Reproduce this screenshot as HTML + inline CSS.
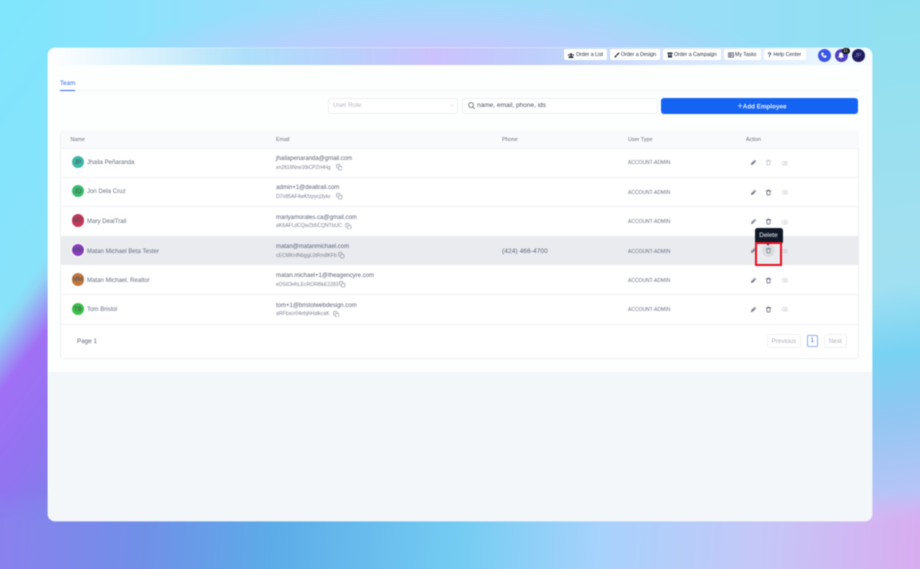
<!DOCTYPE html>
<html><head><meta charset="utf-8"><style>
html,body{margin:0;padding:0}
body{width:920px;height:569px;position:relative;overflow:hidden;background:#9fdcf9;font-family:"Liberation Sans",sans-serif}
div,span.a,svg.a{position:absolute}
.t{position:absolute;white-space:nowrap;line-height:10px;height:10px;margin-top:1px}
.n{font-size:6.1px;color:#667080;left:87px}
.e{font-size:6px;color:#5c6575;left:276px}
.s{font-size:5.1px;color:#7a8290;left:276px;margin-top:.5px}
.u{font-size:5px;color:#6b7382;left:628px}
.h{font-size:5.4px;color:#687080;top:134px}
.av{width:12.5px;height:12.5px;border-radius:50%;left:70.5px;border:.5px solid #fff;font-size:6px;line-height:14px;text-align:center;color:#44505c}
.b{top:49px;height:11px;background:#fff;border-radius:2px;font-size:5.2px;line-height:13px;color:#1f2937;white-space:nowrap;box-sizing:border-box}
.r{left:60.5px;width:798px;height:.7px;background:#f1f2f5}
svg.i{position:absolute;fill:none;stroke-linecap:round;stroke-linejoin:round}
</style></head><body>
<svg width="0" height="0" style="position:absolute"><defs>
<symbol id="pen" viewBox="0 0 24 24"><path d="M4 20l1.500-5.500L16 4l4 4L9.500 18.500z" fill="currentColor" stroke="currentColor" stroke-width="2"/><path d="M13.500 6.500l4 4" stroke="#fff" stroke-width="1.500"/></symbol>
<symbol id="tr" viewBox="0 0 24 24"><path d="M4 6.500h16M9 6.500V4h6v2.500M6 6.500l1.500 14h9L18 6.500" fill="none" stroke="currentColor" stroke-width="2.600"/></symbol>
<symbol id="x" viewBox="0 0 24 24"><path d="M8 5h11a3 3 0 013 3v8a3 3 0 01-3 3H8l-6-7zM11 9l6 6M17 9l-6 6" fill="none" stroke="currentColor" stroke-width="2"/></symbol>
<symbol id="cp" viewBox="0 0 24 24"><rect x="9" y="9" width="13" height="13" rx="2.500" fill="none" stroke="currentColor" stroke-width="2"/><path d="M5 15H4a2 2 0 01-2-2V4a2 2 0 012-2h9a2 2 0 012 2v1" fill="none" stroke="currentColor" stroke-width="2"/></symbol>
</defs></svg>

<!-- background strips -->
<div style="left:0;top:0;width:920px;height:70px;background:radial-gradient(ellipse 330px 62px at 440px 62px,#cfc2fd 0,rgba(190,205,253,.85) 45%,rgba(170,215,252,0) 100%),linear-gradient(90deg,#7fe6fd 0,#9fdcfb 35%,#9fdcfa 60%,#8ee0f2 100%)"></div>
<div style="left:0;top:0;width:48px;height:569px;background:linear-gradient(127deg,#7fe6fd 0,#88e2fa 50%,#90d4f5 53%,#a070f5 62%,#9074f0 78%,#8080ea 92%)"></div>
<div style="left:872px;top:0;width:48px;height:569px;background:linear-gradient(172deg,#8ee0f0 0,#a2e0f0 42%,#a0e0f2 50%,#78d2f2 62%,#92c6f2 73%,#c0c4f8 90%,#d4b0f0 100%)"></div>
<div style="left:0;top:490px;width:920px;height:79px;background:linear-gradient(94deg,#8a80ee 0,#7090e8 16%,#5cace8 30%,#74ccf2 50%,#a6d2fc 65%,#c4c8f8 82%,#d8acf0 100%);-webkit-mask-image:linear-gradient(180deg,transparent 0,#000 31px);mask-image:linear-gradient(180deg,transparent 0,#000 31px)"></div>

<div style="left:0;top:0;width:920px;height:569px;filter:blur(.4px)">
<!-- card -->
<div style="left:47.500px;top:48px;width:824.500px;height:473px;border-radius:7px;overflow:hidden;background:#f3f7fa;box-shadow:0 0 0 .5px rgba(255,255,255,.7)">
<div style="left:0;top:0;width:100%;height:16.500px;background:linear-gradient(90deg,#fff 0,#d3effc 14%,#aee0fa 24%,#bbcffc 37%,#cbc2fc 47%,#bed0fc 60%,#d6e4fd 75%,#e6f3fe 92%,#f8fcff 100%);border-bottom:.8px solid #dcdfe2"></div>
<div style="left:0;top:17.300px;width:100%;height:307px;background:#fdfefe"></div>
</div>

<!-- top bar -->
<div class="b" style="left:564px;width:43px;padding-left:12px">Order a List</div>
<div class="b" style="left:610px;width:50px;padding-left:11px">Order a Design</div>
<div class="b" style="left:663px;width:58px;padding-left:11px">Order a Campaign</div>
<div class="b" style="left:724px;width:37px;padding-left:11px">My Tasks</div>
<div class="b" style="left:764px;width:42px;padding-left:9.500px">Help Center</div>
<svg class="a" style="left:568px;top:52.500px" width="6" height="5" viewBox="0 0 12 10"><circle cx="6" cy="3" r="2.500" fill="#1f2937"/><path d="M1 10c0-3 2-4 5-4s5 1 5 4z" fill="#1f2937"/><circle cx="1.500" cy="4" r="1.500" fill="#1f2937"/><circle cx="10.500" cy="4" r="1.500" fill="#1f2937"/></svg>
<svg class="a" style="left:614px;top:52px" width="6" height="6" viewBox="0 0 12 12"><path d="M1 11c0-3 1-4 3-4l1 1c0 2-1 3-4 3zM4 6l5-5 2 1-1 2-5 4z" fill="#1f2937"/></svg>
<svg class="a" style="left:667px;top:52px" width="6" height="6" viewBox="0 0 12 12"><path d="M1 1h10v3H1zM2 5h8v6H2z" fill="#1f2937"/><path d="M3.500 7h5" stroke="#fff"/></svg>
<svg class="a" style="left:728px;top:52px" width="6" height="6" viewBox="0 0 12 12" fill="none" stroke="#374151" stroke-width="1.200"><rect x="1" y="1.500" width="10" height="9"/><path d="M5 1.500v9M1 4.500h10M1 7.500h10"/></svg>
<div class="t" style="left:767.500px;top:50px;font-size:6.500px;font-weight:bold;color:#1f2937">?</div>

<div style="left:817.500px;top:48.500px;width:13px;height:13px;border-radius:50%;background:#3a56e8"></div>
<svg class="a" style="left:821px;top:52px" width="6" height="6" viewBox="0 0 24 24"><path d="M6 2l4 1 1 6-3 2c1 3 3 5 5 5l2-3 6 1 1 4c0 3-2 5-5 5C9 23 1 14 1 7c0-3 2-5 5-5z" fill="#fff"/></svg>
<div style="left:834.500px;top:48.500px;width:13px;height:13px;border-radius:50%;background:#4f3fc0"></div>
<svg class="a" style="left:838px;top:52px" width="6" height="7" viewBox="0 0 12 14"><path d="M6 1a4 4 0 014 4v3l2 3H0l2-3V5a4 4 0 014-4zM4.500 12h3a1.500 1.500 0 01-3 0z" fill="#fff"/></svg>
<div style="left:841.500px;top:47.800px;width:8px;height:6px;border-radius:3px;background:#111;color:#fff;font-size:4.400px;line-height:6px;text-align:center">11</div>
<div style="left:851.500px;top:48.500px;width:13px;height:13px;border-radius:50%;background:#1e1b5e;color:#9a9ac8;font-size:5.600px;line-height:14px;text-align:center">JP</div>

<!-- tabs -->
<div class="t" style="left:60px;top:78px;font-size:6.300px;color:#3b6fe8">Team</div>
<div style="left:60px;top:90.400px;width:799px;height:.6px;background:#f1f3f7"></div>
<div style="left:60px;top:89.800px;width:14.500px;height:1.200px;background:#2f6bea"></div>

<!-- filters -->
<div style="left:328px;top:97.500px;width:129.500px;height:16px;box-sizing:border-box;background:#fff;border:.7px solid #eceef1;border-radius:3px"></div>
<div class="t" style="left:333px;top:100px;font-size:6.400px;color:#b4b9c2">User Role</div>
<svg class="a" style="left:449.500px;top:104px" width="4" height="3" viewBox="0 0 8 6" fill="none" stroke="#c4c8ce"><path d="M1 1l3 3 3-3"/></svg>
<div style="left:461.500px;top:97.500px;width:196.500px;height:16px;box-sizing:border-box;background:#fff;border:.7px solid #eceef1;border-radius:3px"></div>
<svg class="a" style="left:467.500px;top:101.500px" width="7" height="7.500" viewBox="0 0 14 15" fill="none" stroke="#4b5563" stroke-width="1.400"><circle cx="6" cy="6" r="4.800"/><path d="M9.500 10l4 4"/></svg>
<div class="t" style="left:477px;top:100px;font-size:6.500px;color:#4b5563">name, email, phone, ids</div>
<div style="left:661px;top:97.500px;width:196.500px;height:16px;background:#1463f3;border-radius:3px;color:#e9f0ff;font-size:6.300px;font-weight:bold;line-height:16px;padding-left:76.500px;box-sizing:border-box"><span style="font-size:9px;font-weight:normal;vertical-align:-.5px">+</span>Add Employee</div>

<!-- table -->
<div style="left:60px;top:130.500px;width:799px;height:228.500px;box-sizing:border-box;background:#fff;border:.7px solid #eef0f3;border-radius:3px"></div>
<div style="left:60.500px;top:131px;width:798px;height:17px;background:#f9fafb;border-radius:3px 3px 0 0"></div>
<div class="r" style="top:147.500px"></div>
<div class="r" style="top:177px"></div>
<div class="r" style="top:206px"></div>
<div class="r" style="top:294px"></div>
<div class="r" style="top:323.700px"></div>
<div style="left:60.500px;top:236px;width:798px;height:29px;background:#e9ebef"></div>

<div class="t h" style="left:70.500px">Name</div>
<div class="t h" style="left:276px">Email</div>
<div class="t h" style="left:502px">Phone</div>
<div class="t h" style="left:628px">User Type</div>
<div class="t h" style="left:746px">Action</div>

<!-- row 1 -->
<div class="av" style="top:154.500px;background:#3fb8a6">JP</div>
<div class="t n" style="top:157px">Jhaila Peñaranda</div>
<div class="t e" style="top:153px">jhailapenaranda@gmail.com</div>
<div class="t s" style="top:162px">xn2lt16Nne39iCPZrHHg</div>
<svg class="i" style="left:335.500px;top:164px;color:#7a8290" width="6.500" height="6.500"><use href="#cp"/></svg>
<div class="t u" style="top:157px">ACCOUNT-ADMIN</div>
<!-- row 2 -->
<div class="av" style="top:183.500px;background:#3bba6a">JD</div>
<div class="t n" style="top:186px">Jon Dela Cruz</div>
<div class="t e" style="top:182px">admin+1@dealtrail.com</div>
<div class="t s" style="top:191px">D7n85AF4wKfzpycj3ykc</div>
<svg class="i" style="left:336px;top:193px;color:#7a8290" width="6.500" height="6.500"><use href="#cp"/></svg>
<div class="t u" style="top:186.500px">ACCOUNT-ADMIN</div>
<!-- row 3 -->
<div class="av" style="top:213px;background:#c4385a">MD</div>
<div class="t n" style="top:216px">Mary DealTrail</div>
<div class="t e" style="top:211.500px">mariyamorales.ca@gmail.com</div>
<div class="t s" style="top:220.500px">aK6AFLdCQwZb5CQNTbUC</div>
<svg class="i" style="left:345px;top:222.500px;color:#7a8290" width="6.500" height="6.500"><use href="#cp"/></svg>
<div class="t u" style="top:216px">ACCOUNT-ADMIN</div>
<!-- row 4 -->
<div class="av" style="top:242.500px;background:#8a3cc0">MM</div>
<div class="t n" style="top:245.500px">Matan Michael Beta Tester</div>
<div class="t e" style="top:241px">matan@matanmichael.com</div>
<div class="t s" style="top:250px">cECMKnfNbggL0tRm8KFb</div>
<svg class="i" style="left:338px;top:252px;color:#7a8290" width="6.500" height="6.500"><use href="#cp"/></svg>
<div class="t" style="left:502px;top:245.500px;font-size:6.500px;color:#5c6575;letter-spacing:.1px">(424) 466-4700</div>
<div class="t u" style="top:245.500px">ACCOUNT-ADMIN</div>
<!-- row 5 -->
<div class="av" style="top:272px;background:#c0773e">MM</div>
<div class="t n" style="top:274.500px">Matan Michael, Realtor</div>
<div class="t e" style="top:270px">matan.michael+1@theagencyre.com</div>
<div class="t s" style="top:279px">eDSIOHhLEcRORBkE2283</div>
<svg class="i" style="left:339px;top:281px;color:#7a8290" width="6.500" height="6.500"><use href="#cp"/></svg>
<div class="t u" style="top:275px">ACCOUNT-ADMIN</div>
<!-- row 6 -->
<div class="av" style="top:301.500px;background:#3cc048">TB</div>
<div class="t n" style="top:304px">Tom Bristol</div>
<div class="t e" style="top:300px">tom+1@bristolwebdesign.com</div>
<div class="t s" style="top:308.500px">aRFbxcr04ebjhHalkcaK</div>
<svg class="i" style="left:332.500px;top:310.500px;color:#7a8290" width="6.500" height="6.500"><use href="#cp"/></svg>
<div class="t u" style="top:304px">ACCOUNT-ADMIN</div>

<!-- action icons -->
<svg class="i" style="left:749.500px;top:159px;color:#7b828e" width="7" height="7"><use href="#pen"/></svg>
<svg class="i" style="left:765px;top:159px;color:#c2c5ca" width="7" height="7"><use href="#tr"/></svg>
<svg class="i" style="left:780.500px;top:159.500px;color:#c2c5ca" width="7" height="6.500"><use href="#x"/></svg>

<svg class="i" style="left:749.500px;top:188.500px;color:#7b828e" width="7" height="7"><use href="#pen"/></svg>
<svg class="i" style="left:765px;top:188.500px;color:#5f6775" width="7" height="7"><use href="#tr"/></svg>
<svg class="i" style="left:780.500px;top:189px;color:#c2c5ca" width="7" height="6.500"><use href="#x"/></svg>

<svg class="i" style="left:749.500px;top:218px;color:#8a909b" width="7" height="7"><use href="#pen"/></svg>
<svg class="i" style="left:765px;top:218px;color:#5f6775" width="7" height="7"><use href="#tr"/></svg>
<svg class="i" style="left:780.500px;top:218.500px;color:#c2c5ca" width="7" height="6.500"><use href="#x"/></svg>

<svg class="i" style="left:749.500px;top:247px;color:#7b828e" width="7" height="7"><use href="#pen"/></svg>
<svg class="i" style="left:780.500px;top:247.500px;color:#c2c5ca" width="7" height="6.500"><use href="#x"/></svg>
<div style="left:761.500px;top:243.500px;width:13.500px;height:13.500px;border-radius:50%;background:#dcdde1"></div>
<svg class="i" style="left:765px;top:247px;color:#7b828e" width="7" height="7"><use href="#tr"/></svg>

<svg class="i" style="left:749.500px;top:276.500px;color:#7b828e" width="7" height="7"><use href="#pen"/></svg>
<svg class="i" style="left:765px;top:276.500px;color:#5f6775" width="7" height="7"><use href="#tr"/></svg>
<svg class="i" style="left:780.500px;top:277px;color:#c2c5ca" width="7" height="6.500"><use href="#x"/></svg>

<svg class="i" style="left:749.500px;top:305.500px;color:#7b828e" width="7" height="7"><use href="#pen"/></svg>
<svg class="i" style="left:765px;top:305.500px;color:#5f6775" width="7" height="7"><use href="#tr"/></svg>
<svg class="i" style="left:780.500px;top:306px;color:#c2c5ca" width="7" height="6.500"><use href="#x"/></svg>

<!-- tooltip and highlight -->
<div style="left:754.500px;top:228px;width:28px;height:16px;background:#111827;border-radius:2.500px;color:#f3f4f6;font-size:6.400px;line-height:16px;text-align:center">Delete</div>
<div style="left:767px;top:243px;width:2px;height:2px;background:#111827;transform:rotate(45deg)"></div>
<div style="left:755px;top:241.500px;width:27px;height:24px;box-sizing:border-box;border:2px solid #e5101f"></div>

<!-- pagination -->
<div class="t" style="left:77px;top:335.500px;font-size:6.300px;color:#5c6575">Page 1</div>
<div style="left:766.500px;top:333.500px;width:34.500px;height:14.500px;box-sizing:border-box;border:.7px solid #eef0f3;border-radius:3px;color:#aab0b9;font-size:6.300px;line-height:14px;text-align:center">Previous</div>
<div style="left:806.500px;top:335px;width:11.500px;height:11.500px;box-sizing:border-box;border:.8px solid #8fadf0;border-radius:1.500px;color:#3b5fc0;font-size:6.300px;line-height:10.500px;text-align:center">1</div>
<div style="left:823.500px;top:333.500px;width:23.500px;height:14.500px;box-sizing:border-box;border:.7px solid #eef0f3;border-radius:3px;color:#aab0b9;font-size:6.300px;line-height:14px;text-align:center">Next</div>
</div>
</body></html>
